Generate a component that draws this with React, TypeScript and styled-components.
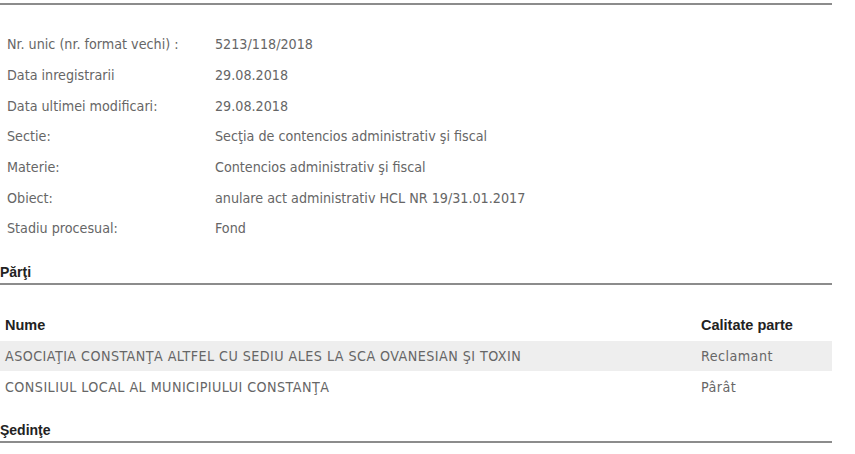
import React from "react";
import styled, { createGlobalStyle } from "styled-components";

const Global = createGlobalStyle`
  html, body { margin: 0; padding: 0; background: #ffffff; }
  body { font-family: "DejaVu Sans Condensed", "DejaVu Sans", sans-serif; }
`;

const Page = styled.div`
  width: 832px;
  padding-top: 3px;
`;

const Rule = styled.div`
  height: 2px;
  background: #8c8c8c;
`;

const InfoList = styled.div`
  display: flex;
  flex-direction: column;
  padding: 24px 0 0 7px;
`;

const InfoRow = styled.div`
  display: grid;
  grid-template-columns: 208px 1fr;
  height: 30.7px;
  align-items: center;
  font-size: 14.2px;
  color: #666666;
`;

const SectionTitle = styled.div<{ $top: number }>`
  font-family: "Liberation Sans", Arial, sans-serif;
  font-weight: bold;
  font-size: 14px;
  color: #222222;
  margin-top: ${(p) => p.$top}px;
  height: 21px;
  display: flex;
  align-items: center;
`;

const Table = styled.div`
  display: flex;
  flex-direction: column;
  padding-top: 24px;
`;

const TRow = styled.div<{ $shade?: boolean; $head?: boolean }>`
  display: grid;
  grid-template-columns: 696px 1fr;
  height: ${(p) => (p.$head ? 32 : 30.5)}px;
  align-items: center;
  padding-left: 5px;
  background: ${(p) => (p.$shade ? "#eeeeee" : "transparent")};
  font-family: ${(p) =>
    p.$head ? `"Liberation Sans", Arial, sans-serif` : `"DejaVu Sans Condensed", "DejaVu Sans", sans-serif`};
  font-weight: ${(p) => (p.$head ? "bold" : "normal")};
  font-size: ${(p) => (p.$head ? 14.5 : 14.2)}px;
  letter-spacing: ${(p) => (p.$head ? 0 : 0.45)}px;
  color: ${(p) => (p.$head ? "#222222" : "#666666")};
`;

const info: [string, string][] = [
  ["Nr. unic (nr. format vechi) :", "5213/118/2018"],
  ["Data inregistrarii", "29.08.2018"],
  ["Data ultimei modificari:", "29.08.2018"],
  ["Sectie:", "Secţia de contencios administrativ şi fiscal"],
  ["Materie:", "Contencios administrativ şi fiscal"],
  ["Obiect:", "anulare act administrativ HCL NR 19/31.01.2017"],
  ["Stadiu procesual:", "Fond"],
];

const parti: [string, string][] = [
  ["ASOCIAŢIA CONSTANŢA ALTFEL CU SEDIU ALES LA SCA OVANESIAN ŞI TOXIN", "Reclamant"],
  ["CONSILIUL LOCAL AL MUNICIPIULUI CONSTANŢA", "Pârât"],
];

export default function App() {
  return (
    <Page>
      <Global />
      <Rule />
      <InfoList>
        {info.map(([k, v]) => (
          <InfoRow key={k}>
            <span>{k}</span>
            <span>{v}</span>
          </InfoRow>
        ))}
      </InfoList>
      <SectionTitle $top={18}>Părţi</SectionTitle>
      <Rule />
      <Table>
        <TRow $head>
          <span>Nume</span>
          <span>Calitate parte</span>
        </TRow>
        {parti.map(([n, c], i) => (
          <TRow key={n} $shade={i === 0}>
            <span>{n}</span>
            <span>{c}</span>
          </TRow>
        ))}
      </Table>
      <SectionTitle $top={18}>Şedinţe</SectionTitle>
      <Rule />
    </Page>
  );
}
